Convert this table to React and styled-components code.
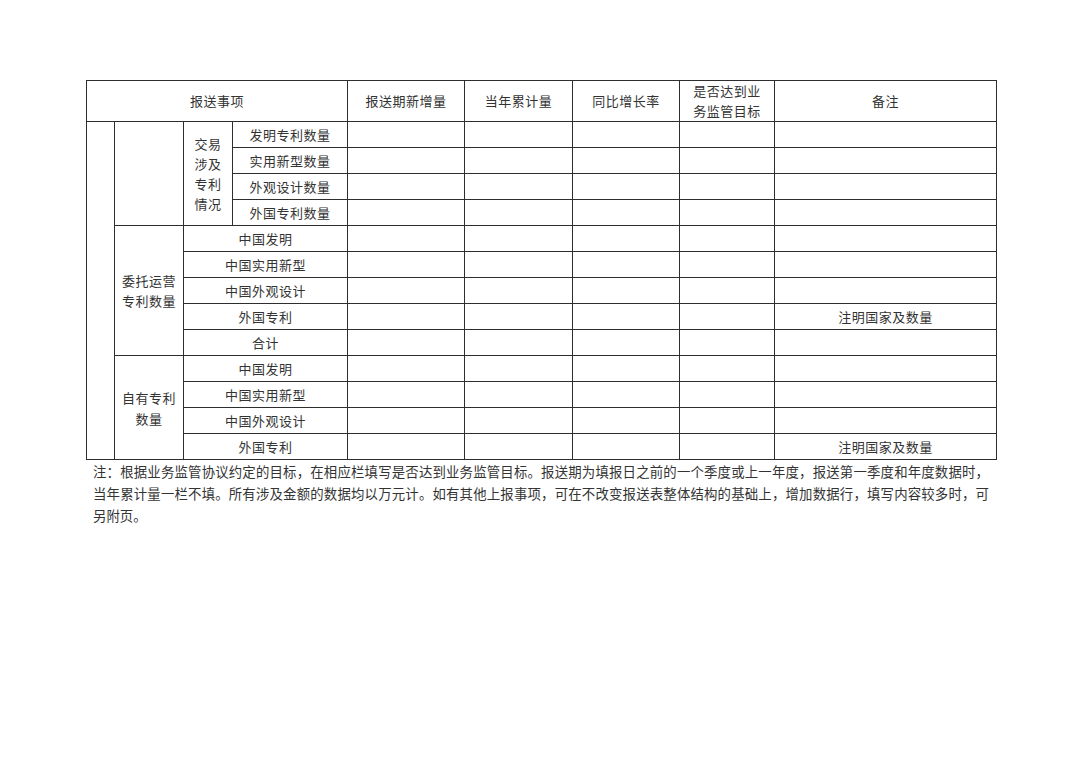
import React from 'react';
import styled, { createGlobalStyle } from 'styled-components';

const GlobalStyle = createGlobalStyle`
  html, body {
    margin: 0;
    padding: 0;
    background: #fff;
  }
  body {
    font-family: "Liberation Serif", "Noto Sans CJK SC", serif;
    color: #2b2b2b;
  }
`;

const Page = styled.div`
  width: 1080px;
  height: 763px;
  box-sizing: border-box;
  padding: 80px 0 0 86px;
  background: #fff;
`;

const Table = styled.table`
  width: 910px;
  border-collapse: collapse;
  table-layout: fixed;
  font-family: "Noto Sans CJK SC", sans-serif;
  font-size: 13px;
  color: #333;
`;

const HeadRow = styled.tr`
  height: 40px;
`;

const Row = styled.tr`
  height: 26px;
`;

const Cell = styled.td`
  border: 1px solid #2e2e2e;
  padding: 0;
  text-align: center;
  vertical-align: middle;
  line-height: ${p => p.$lh || '20px'};
  letter-spacing: 0.5px;
  white-space: pre-line;
`;

const Note = styled.div`
  width: 896px;
  margin-left: 7px;
  font-family: "Noto Sans CJK SC", sans-serif;
  font-size: 13.4px;
  line-height: 22px;
  color: #333;
`;

const NoteLine = styled.div`
  text-align: justify;
  text-align-last: ${p => (p.$full ? 'justify' : 'left')};
`;

const widths = [28, 69, 49, 115, 117, 108, 107, 95, 222];

function Blanks({ notes }) {
  return (
    <>
      <Cell />
      <Cell />
      <Cell />
      <Cell />
      <Cell>{notes || ''}</Cell>
    </>
  );
}

export default function App() {
  return (
    <Page>
      <GlobalStyle />
      <Table>
        <colgroup>
          {widths.map((w, i) => (
            <col key={i} style={{ width: w }} />
          ))}
        </colgroup>
        <tbody>
          <HeadRow>
            <Cell colSpan={4}>报送事项</Cell>
            <Cell>报送期新增量</Cell>
            <Cell>当年累计量</Cell>
            <Cell>同比增长率</Cell>
            <Cell>{'是否达到业\n务监管目标'}</Cell>
            <Cell>备注</Cell>
          </HeadRow>

          <Row>
            <Cell rowSpan={13} />
            <Cell rowSpan={4} />
            <Cell rowSpan={4}>{'交易\n涉及\n专利\n情况'}</Cell>
            <Cell>发明专利数量</Cell>
            <Blanks />
          </Row>
          <Row>
            <Cell>实用新型数量</Cell>
            <Blanks />
          </Row>
          <Row>
            <Cell>外观设计数量</Cell>
            <Blanks />
          </Row>
          <Row>
            <Cell>外国专利数量</Cell>
            <Blanks />
          </Row>

          <Row>
            <Cell rowSpan={5}>{'委托运营\n专利数量'}</Cell>
            <Cell colSpan={2}>中国发明</Cell>
            <Blanks />
          </Row>
          <Row>
            <Cell colSpan={2}>中国实用新型</Cell>
            <Blanks />
          </Row>
          <Row>
            <Cell colSpan={2}>中国外观设计</Cell>
            <Blanks />
          </Row>
          <Row>
            <Cell colSpan={2}>外国专利</Cell>
            <Blanks notes="注明国家及数量" />
          </Row>
          <Row>
            <Cell colSpan={2}>合计</Cell>
            <Blanks />
          </Row>

          <Row>
            <Cell rowSpan={4} $lh="21px">{'自有专利\n数量'}</Cell>
            <Cell colSpan={2}>中国发明</Cell>
            <Blanks />
          </Row>
          <Row>
            <Cell colSpan={2}>中国实用新型</Cell>
            <Blanks />
          </Row>
          <Row>
            <Cell colSpan={2}>中国外观设计</Cell>
            <Blanks />
          </Row>
          <Row>
            <Cell colSpan={2}>外国专利</Cell>
            <Blanks notes="注明国家及数量" />
          </Row>
        </tbody>
      </Table>
      <Note>
        <NoteLine $full>
          注：根据业务监管协议约定的目标，在相应栏填写是否达到业务监管目标。报送期为填报日之前的一个季度或上一年度，报送第一季度和年度数据时，
        </NoteLine>
        <NoteLine $full>
          当年累计量一栏不填。所有涉及金额的数据均以万元计。如有其他上报事项，可在不改变报送表整体结构的基础上，增加数据行，填写内容较多时，可
        </NoteLine>
        <NoteLine>另附页。</NoteLine>
      </Note>
    </Page>
  );
}
